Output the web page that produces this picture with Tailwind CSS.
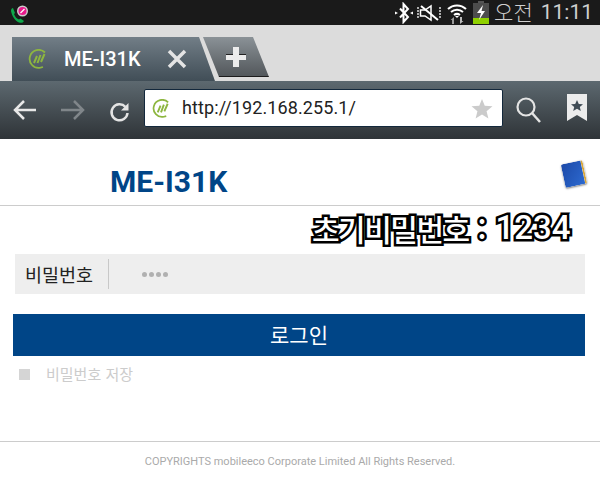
<!DOCTYPE html>
<html lang="ko">
<head>
  <meta charset="UTF-8" />
  <title>ME-I31K</title>
  <script src="https://cdn.jsdelivr.net/npm/@tailwindcss/browser@4"></script>
</head>
<body class="w-[600px] h-[485px] overflow-hidden bg-white font-['Roboto','Noto_Sans_CJK_KR',sans-serif]">
  <!-- status bar -->
  <div class="h-[25px] bg-[#1a1a1a] flex items-center justify-between pl-[9px] pr-[7px]">
    <svg width="22" height="22" viewBox="0 0 22 22">
      <path d="M2 9 C2 7 3 6 4 6 L6 11 L5 12 C6 15 8 17 10 17.500 L11.500 16.500 L15 19 C14 21 12 21 10 20.500 C6 19 3 14 2 9Z" fill="#0da84a"/>
      <circle cx="13.500" cy="9" r="5.500" fill="#ccc"/>
      <circle cx="13.500" cy="9" r="4" fill="#e8188c"/>
      <path d="M11.500 11 L15.500 7" stroke="#fff" stroke-width="1.200"/>
    </svg>
    <div class="flex items-center">
      <svg width="20" height="22" viewBox="0 0 20 22" class="mr-[3px]">
        <path d="M6 6.500 L14 15 L9.500 20 V2 L14 7 L6 15.500" fill="none" stroke="#fff" stroke-width="2"/>
        <path d="M1 9.500 L4 11 L1 12.500Z M19 9.500 L16 11 L19 12.500Z" fill="#fff"/>
      </svg>
      <svg width="24" height="18" viewBox="0 0 24 18" class="mr-[5px]">
        <path d="M1 3 V15 M23 3 V15" stroke="#ddd" stroke-width="1.500" stroke-dasharray="2 1" fill="none"/>
        <path d="M3.500 6 H8 L14 2 V16 L8 12 H3.500Z" fill="none" stroke="#fff" stroke-width="1.500"/>
        <path d="M4 2 L21 16" stroke="#fff" stroke-width="2"/>
      </svg>
      <svg width="22" height="24" viewBox="0 0 22 24" class="mr-[5px]">
        <path d="M2 8 A13 13 0 0 1 20 8 M5 11 A9 9 0 0 1 17 11 M8 14 A5 5 0 0 1 14 14" fill="none" stroke="#fff" stroke-width="2"/>
        <path d="M11 17 L9 15 L13 15Z" fill="#fff"/>
        <path d="M8 16 V23 H6 V19 H4.500Z" fill="#999"/>
        <path d="M14 23 V16 H16 V20 H17.500Z" fill="#bbb"/>
      </svg>
      <svg width="16" height="23" viewBox="0 0 16 23">
        <rect x="5" y="0" width="6" height="2" fill="#555"/>
        <rect x="0" y="2" width="16" height="16" fill="#4d4d4d"/>
        <rect x="0" y="17" width="16" height="6" fill="#8fd000"/>
        <path d="M10 4 L4 12 H8 L6 19 L12 10 H8.500Z" fill="#fff"/>
      </svg>
      <span class="ml-[5px] mb-[3px] text-[21px] leading-[22px] text-[#cfcfcf] font-['Noto_Sans_CJK_KR',sans-serif] font-light">오전</span>
      <span class="ml-[8px] text-[21px] leading-[25px] text-[#cfcfcf]">11:11</span>
    </div>
  </div>

  <!-- tab strip -->
  <div class="h-[56px] bg-[#dcdcdc] pt-[12px] pl-[12px] flex items-start">
    <div class="w-[203px] h-[44px] bg-gradient-to-b from-[#727e87] to-[#414e57] [clip-path:polygon(0_0,187px_0,203px_100%,0_100%)] flex items-center pl-[16px]">
      <svg width="20" height="20" viewBox="0 0 20 20">
        <path d="M17 3.500 A9 9 0 1 0 12.500 18.700 L15 18" fill="none" stroke="#8db63f" stroke-width="1.800"/>
        <path d="M6 14 L9 7 M9.500 14 L12.500 6 M13 13 L16.500 5" stroke="#8db63f" stroke-width="2"/>
      </svg>
      <span class="ml-[16px] text-[20px] font-medium text-white leading-none">ME-I31K</span>
      <svg width="22" height="22" viewBox="0 0 22 22" class="ml-[25px]">
        <path d="M3 3 L19 19 M19 3 L3 19" stroke="#e4e4e4" stroke-width="3.500"/>
      </svg>
    </div>
    <div class="-ml-[12px] w-[66px] h-[40px] bg-gradient-to-b from-[#8b9297] to-[#53585c] [clip-path:polygon(0_0,50px_0,66px_100%,16px_100%)] border-b border-[#1c1c1c] flex items-center justify-center">
      <span class="relative w-[20px] h-[20px] block">
        <span class="absolute left-0 top-[7px] w-[20px] h-[6px] bg-[#ececec] border-t border-[#222]"></span>
        <span class="absolute left-[7px] top-0 w-[6px] h-[20px] bg-[#ececec]"></span>
      </span>
    </div>
  </div>

  <!-- toolbar -->
  <div class="h-[58px] bg-gradient-to-b from-[#5d6970] to-[#2f3438] flex items-center pl-[13px]">
    <svg width="24" height="24" viewBox="0 0 24 24">
      <path d="M23 12 H3 M11 3 L2 12 L11 21" fill="none" stroke="#e8e8e8" stroke-width="2.500"/>
    </svg>
    <svg width="26" height="24" viewBox="0 0 26 24" class="ml-[23px]">
      <path d="M1 12 H23 M14 3 L23 12 L14 21" fill="none" stroke="#80868a" stroke-width="2.500"/>
    </svg>
    <svg width="22" height="22" viewBox="0 0 22 22" class="ml-[23px] mt-[3px]">
      <path d="M16.500 6 A8 8 0 1 0 18.500 12" fill="none" stroke="#e4e4e4" stroke-width="2.500"/>
      <path d="M19.500 2 V9.500 H12Z" fill="#e4e4e4"/>
    </svg>
    <div class="ml-[13px] -mt-[4px] w-[359px] h-[38px] bg-white border border-[#13283c] rounded-[2px] flex items-center pl-[7px] pr-[9px]">
      <svg width="19" height="19" viewBox="0 0 20 20">
        <path d="M17 3.500 A9 9 0 1 0 12.500 18.700 L15 18" fill="none" stroke="#8db63f" stroke-width="1.800"/>
        <path d="M6 14 L9 7 M9.500 14 L12.500 6 M13 13 L16.500 5" stroke="#8db63f" stroke-width="2"/>
      </svg>
      <span class="ml-[11px] text-[18px] text-[#222] tracking-[0.1px] leading-none">http://192.168.255.1/</span>
      <svg width="22" height="21" viewBox="0 0 24 23" class="ml-auto">
        <path d="M12 1 L15 8.500 L23.500 9 L17 14.500 L19 22.500 L12 18 L5 22.500 L7 14.500 L.5 9 L9 8.500Z" fill="#cbcbcb"/>
      </svg>
    </div>
    <svg width="26" height="28" viewBox="0 0 26 28" class="ml-[12px] -mt-[1px]">
      <circle cx="11" cy="11" r="8.500" fill="none" stroke="#e4e4e4" stroke-width="2.200"/>
      <path d="M17 17 L25 26" stroke="#e4e4e4" stroke-width="2.500"/>
    </svg>
    <svg width="20" height="28" viewBox="0 0 20 28" class="ml-[26px] -mt-[4px]">
      <path d="M0 0 H20 V27 L10 21 L0 27Z" fill="#ececec"/>
      <path d="M10 6 L11.800 10 L16 10.300 L12.800 13 L13.800 17 L10 14.800 L6.200 17 L7.200 13 L4 10.300 L8.200 10Z" fill="#3f4b55"/>
    </svg>
  </div>

  <!-- page -->
  <div class="relative">
    <div class="h-[67px] border-b border-[#cccccc] pl-[110px] pt-[27px] relative">
      <h1 class="text-[30px] leading-[32px] font-bold text-[#004587]">ME-I31K</h1>
      <div class="absolute left-[563px] top-[23px] w-[22px] h-[24px] rotate-[-12deg] rounded-[2px] bg-gradient-to-br from-[#1c49a8] to-[#2d6ad0] border-r-2 border-[#d8a63a] shadow-[0_1px_2px_rgba(0,0,0,0.5)]"></div>
    </div>

    <div class="absolute left-[312px] top-[71px] flex items-center text-[30px] leading-[36px] font-medium text-white whitespace-nowrap font-['Noto_Sans_CJK_KR','Roboto',sans-serif] [-webkit-text-stroke:5px_black] [paint-order:stroke_fill]">
      <span class="tracking-[-1.500px]">초기비밀번호</span>
      <span class="ml-[9px]">:</span>
      <span class="ml-[9px] text-[33px] font-['Roboto',sans-serif] font-medium">1234</span>
    </div>

    <div class="mt-[48px] mx-[15px] h-[40px] bg-[#eeeeee] flex items-center">
      <label class="w-[94px] h-[30px] border-r border-[#c8c8c8] pl-[10px] text-[18.500px] leading-[30px] text-[#222] font-['Noto_Sans_CJK_KR',sans-serif]">비밀번호</label>
      <div class="ml-[33px] flex gap-[2px]">
        <span class="w-[5px] h-[5px] rounded-full bg-[#b0b0b0]"></span>
        <span class="w-[5px] h-[5px] rounded-full bg-[#b0b0b0]"></span>
        <span class="w-[5px] h-[5px] rounded-full bg-[#b0b0b0]"></span>
        <span class="w-[5px] h-[5px] rounded-full bg-[#b0b0b0]"></span>
      </div>
    </div>

    <button class="block mt-[20px] ml-[13px] w-[572px] h-[42px] bg-[#004587] text-white text-[21px] font-['Noto_Sans_CJK_KR',sans-serif]">로그인</button>

    <div class="mt-[8px] ml-[19px] flex items-center h-[20px]">
      <span class="w-[11px] h-[11px] bg-[#d5d5d5]"></span>
      <span class="ml-[16px] text-[15px] text-[#cccccc] font-['Noto_Sans_CJK_KR',sans-serif]">비밀번호 저장</span>
    </div>

    <div class="mt-[57px] border-t border-[#cccccc] pt-[12px] text-center text-[11px] leading-[15px] text-[#aaaaaa]">COPYRIGHTS mobileeco Corporate Limited All Rights Reserved.</div>
  </div>
</body>
</html>
